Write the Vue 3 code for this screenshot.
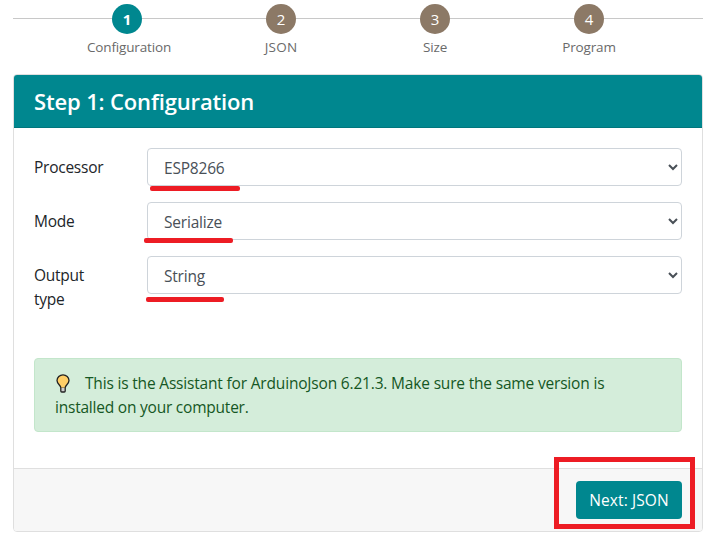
<script setup>
import { ref } from 'vue'

const steps = [
  { n: 1, label: 'Configuration', active: true },
  { n: 2, label: 'JSON' },
  { n: 3, label: 'Size' },
  { n: 4, label: 'Program' },
]
const fields = ref([
  { id: 'processor', label: 'Processor', value: 'ESP8266' },
  { id: 'mode', label: 'Mode', value: 'Serialize' },
  { id: 'output', label: 'Output type', value: 'String' },
])
</script>

<template>
  <main class="page">
    <ol class="steps">
      <li v-for="s in steps" :key="s.n" class="step" :class="{ active: s.active }">
        <span class="circle">{{ s.n }}</span>
        <span class="step-label" :class="'label-' + s.n">{{ s.label }}</span>
      </li>
    </ol>
    <section class="card">
      <header class="card-header"><h1>Step 1: Configuration</h1></header>
      <div class="card-body">
        <div v-for="f in fields" :key="f.id" class="row">
          <label :for="f.id">{{ f.label }}</label>
          <div class="control">
            <select :id="f.id" v-model="f.value">
              <option>{{ f.value }}</option>
            </select>
            <i class="underline" :class="'mark-' + f.id"></i>
          </div>
        </div>
        <div class="alert">
          <div class="line first">
            <svg class="bulb" width="14" height="20" viewBox="0 0 14 20">
              <path d="M4.8 13.2 H9.2 V17 Q9.2 18 8.2 18 H5.8 Q4.8 18 4.8 17 Z" fill="#d0cfce" stroke="#222" stroke-width="1.3" />
              <path d="M4.8 13.6 C4.7 11.2 1 10 1 6.6 A6 5.8 0 0 1 13 6.6 C13 10 9.3 11.2 9.2 13.6 Z" fill="#ffce67" />
              <path d="M4.8 13.6 C4.7 11.2 1 10 1 6.6 A6 5.8 0 0 1 13 6.6 C13 10 9.3 11.2 9.2 13.6" fill="none" stroke="#222" stroke-width="1.3" />
            </svg>
            <span>This is the Assistant for ArduinoJson 6.21.3. Make sure the same version is</span>
          </div>
          <div class="line second">installed on your computer.</div>
        </div>
      </div>
      <footer class="card-footer">
        <button type="button">Next: JSON</button>
        <i class="highlight"></i>
      </footer>
    </section>
  </main>
</template>

<style>
body { margin: 0; background: #fff; }
</style>

<style scoped>
* { box-sizing: border-box; }
.page {
  width: 715px;
  height: 537px;
  padding: 4px 12px 0 13px;
  overflow: hidden;
  font-family: "Open Sans", "Noto Sans", sans-serif;
  font-size: 15.5px;
  letter-spacing: -0.25px;
  line-height: 24px;
  color: #212529;
}
.steps {
  display: flex;
  height: 70px;
  margin: 0;
  padding: 0 37px;
  list-style: none;
  background: linear-gradient(#c8c8c8, #c8c8c8) 0 14px / 100% 1px no-repeat;
}
.step { width: 154px; display: flex; flex-direction: column; align-items: center; }
.circle {
  width: 30px;
  height: 30px;
  border-radius: 50%;
  background: #8c7966;
  color: #fff;
  font-size: 15px;
  letter-spacing: 0;
  line-height: 31px;
  text-align: center;
}
.active .circle { background: #00878f; font-weight: 700; }
.step-label { margin-top: 3px; font-size: 13.5px; letter-spacing: -0.15px; line-height: 20px; color: #6a6a6a; white-space: nowrap; }
.label-1 { padding-left: 4px; }
.label-2 { letter-spacing: 0.2px; }
.card {
  width: 690px;
  height: 458px;
  display: flex;
  flex-direction: column;
  border: 1px solid #dfdfdf;
  border-radius: 4px;
}
.card-header {
  height: 53px;
  padding: 0 20px;
  display: flex;
  align-items: center;
  background: #00878f;
  border-bottom: 1px solid #00767d;
  border-radius: 3px 3px 0 0;
}
h1 { margin: 0 0 1px; color: #fff; font-size: 22px; letter-spacing: -0.15px; font-weight: 600; line-height: 28px; white-space: nowrap; }
.card-body { flex: 1; padding: 20px 20px 0; }
.row { display: flex; height: 54px; }
label { width: 113px; padding: 7px 40px 0 0; }
.control { position: relative; width: 535px; height: 38px; }
select {
  display: block;
  width: 100%;
  height: 38px;
  padding: 7px 1px 5px 12px;
  border: 1px solid #ced4da;
  border-radius: 4px;
  background: #fff;
  color: #495057;
  font: inherit;
  letter-spacing: -0.2px;
}
.underline { position: absolute; height: 5px; border-radius: 2px; background: #ed1c24; }
.mark-processor { left: 3px; top: 38px; width: 90px; }
.mark-mode { left: -3px; top: 36px; width: 89px; }
.mark-output { left: -1px; top: 41px; width: 78px; }
.alert {
  height: 74px;
  margin-top: 48px;
  padding: 12px 20px;
  border: 1px solid #c3e6cb;
  border-radius: 4px;
  background: #d4edda;
  color: #155724;
  letter-spacing: -0.18px;
}
.line { height: 24px; white-space: nowrap; }
.first { display: flex; }
.bulb { margin: 3px 15px 0 1px; flex: none; }
.second { letter-spacing: -0.22px; }
.card-footer {
  position: relative;
  height: 63px;
  padding: 12px 20px;
  display: flex;
  justify-content: flex-end;
  border-top: 1px solid #dfdfdf;
  background: #f7f7f7;
  border-radius: 0 0 3px 3px;
}
button {
  width: 106px;
  height: 38px;
  padding: 0;
  border: 0;
  border-radius: 4px;
  background: #00878f;
  color: #fff;
  font: inherit;
  letter-spacing: 0.1px;
}
.highlight { position: absolute; top: -12px; right: 7px; width: 141px; height: 72px; border: 5px solid #ed1c24; }
</style>
